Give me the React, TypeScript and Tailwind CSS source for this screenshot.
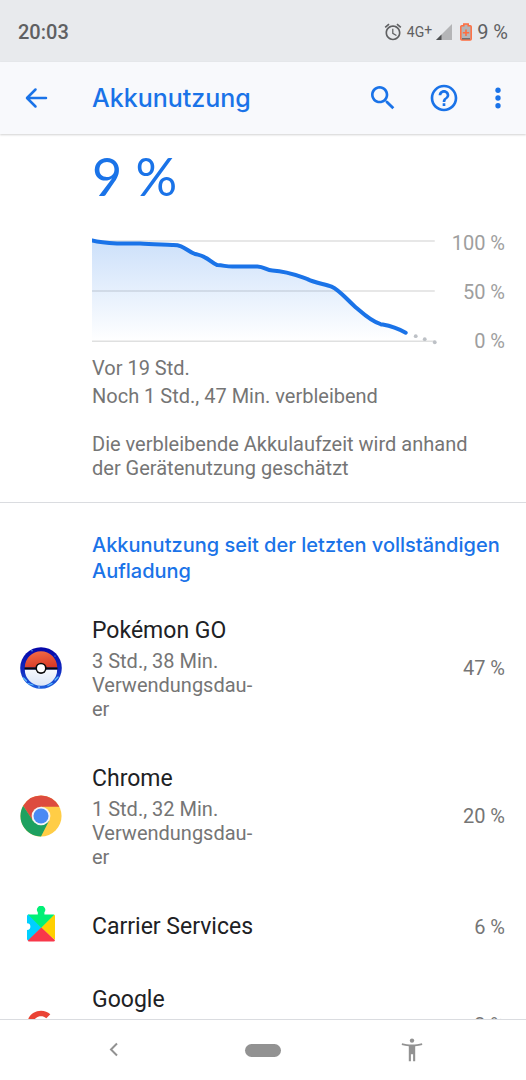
import type { ReactNode } from 'react';

interface AppUsage {
  name: string;
  detail?: string;
  percent: string;
  icon: ReactNode;
}

const PokemonIcon = () => (
  <svg viewBox="0 0 42 42" className="size-[42px]" aria-hidden="true">
    <defs>
      <linearGradient id="pokeRing" x1="0" y1="0" x2="0" y2="1">
        <stop offset="0" stopColor="#0505a8" />
        <stop offset="0.55" stopColor="#1029c0" />
        <stop offset="1" stopColor="#1f62e0" />
      </linearGradient>
      <linearGradient id="pokeTop" x1="0.3" y1="0" x2="0.6" y2="1">
        <stop offset="0" stopColor="#f06a45" />
        <stop offset="1" stopColor="#d93a26" />
      </linearGradient>
      <linearGradient id="pokeBottom" x1="0" y1="0" x2="0" y2="1">
        <stop offset="0" stopColor="#f6f9fd" />
        <stop offset="1" stopColor="#dbe6f6" />
      </linearGradient>
    </defs>
    <circle cx="21" cy="21" r="20.8" fill="url(#pokeRing)" />
    <path d="M4.8 20.5a16.2 16.2 0 0 1 32.4 0z" fill="url(#pokeTop)" />
    <path d="M4.8 22.5a16.2 16.2 0 0 0 32.4 0z" fill="url(#pokeBottom)" />
    <path d="M4.5 20.5h33v2h-33z" fill="#0a0a0a" />
    <circle cx="21" cy="21.3" r="5.6" fill="#0a0a0a" />
    <circle cx="21" cy="21.3" r="4" fill="#fff" />
    <path
      d="M3.5 31l3 3M8 36.5l5 1.5M28 38.5l4-2M35 33l3-3"
      fill="none"
      stroke="#5cc0ff"
      strokeWidth="1.3"
      strokeLinecap="round"
    />
    <circle cx="12" cy="3.8" r="0.7" fill="#5cc0ff" />
    <circle cx="35" cy="9" r="0.6" fill="#5cc0ff" />
    <circle cx="19" cy="40" r="0.8" fill="#a8e0ff" />
  </svg>
);

const ChromeIcon = () => (
  <svg viewBox="0 0 48 48" className="size-[42px]" aria-hidden="true">
    <circle cx="24" cy="24" r="23.5" fill="#ffcd46" />
    <path
      d="M24 .5A23.5 23.5 0 0 0 3.6 12.4L14.5 29.5 24 13.5h21A23.5 23.5 0 0 0 24 .5z"
      fill="#dd4b3e"
    />
    <path
      d="M3.6 12.4A23.5 23.5 0 0 0 24 47.5L33.2 29.3 24 34.5 14.8 29.3z"
      fill="#1da160"
    />
    <circle cx="24" cy="24" r="10.7" fill="#f5f5f5" />
    <circle cx="24" cy="24" r="8.6" fill="#4a8af4" />
  </svg>
);

const CarrierIcon = () => (
  <svg viewBox="0 3 42 42" className="size-[42px]" aria-hidden="true">
    <path d="M8.5 11.5a1.5 1.5 0 0 0-1.5 1.5v7.2a3.4 3.4 0 1 1 0 6.8V36a1.5 1.5 0 0 0 1.5 1.5L22 24.5 9 11.5z" fill="#00d0ff" />
    <path d="M8 11.5h9.8V9.3a4.1 4.1 0 1 1 6.6 0v2.2h9.3l.8.5L21.5 25z" fill="#00f076" />
    <path d="M34.3 11.8a1.5 1.5 0 0 1 .7 1.4V37L21 25z" fill="#ffd000" />
    <path d="M7.8 37.5 21.3 24.5 35 37.3a1.5 1.5 0 0 1-1.5 1.2H8.5z" fill="#f8384a" />
  </svg>
);

const GoogleIcon = () => (
  <svg viewBox="0 0 48 48" className="size-[30px]" aria-hidden="true">
    <path fill="#4285f4" d="M46.1 24.5c0-1.6-.1-3.1-.4-4.5H24v9h12.4c-.6 2.9-2.2 5.3-4.6 6.9l7.3 5.7c4.3-4 7-9.9 7-17.1z" />
    <path fill="#34a853" d="M24 46c5.9 0 11-2 15-5.4l-7.3-5.7c-2 1.4-4.6 2.2-7.7 2.2-6 0-11-4-12.8-9.5l-7.5 5.8C7.4 41 15.1 46 24 46z" />
    <path fill="#fbbc05" d="M11.2 27.6a13 13 0 0 1 0-8.2l-7.5-5.8a22 22 0 0 0 0 19.8z" />
    <path fill="#ea4335" d="M24 9.9c3.3 0 6.2 1.1 8.5 3.3l6.4-6.4C35 3.2 29.9 1 24 1 15.1 1 7.4 6.1 3.7 13.6l7.5 5.8C13 13.9 18 9.9 24 9.9z" />
  </svg>
);

const usages: AppUsage[] = [
  {
    name: 'Pokémon GO',
    detail: '3 Std., 38 Min. Verwendungsdau\u00ADer',
    percent: '47 %',
    icon: <PokemonIcon />,
  },
  {
    name: 'Chrome',
    detail: '1 Std., 32 Min. Verwendungsdau\u00ADer',
    percent: '20 %',
    icon: <ChromeIcon />,
  },
  { name: 'Carrier Services', percent: '6 %', icon: <CarrierIcon /> },
  {
    name: 'Google',
    detail: 'Verwendungsdau\u00ADer',
    percent: '3 %',
    icon: <GoogleIcon />,
  },
];

const StatusBar = () => (
  <div className="flex h-[62px] shrink-0 items-center justify-between bg-[#e8eaed] px-[18px] pt-0.5 text-[#5f6062]">
    <span className="text-xl font-medium">20:03</span>
    <div className="flex items-center">
      <svg viewBox="0 0 24 24" className="size-5" fill="currentColor" role="img" aria-label="Wecker">
        <path d="M22 5.72l-4.6-3.86-1.29 1.53 4.6 3.86L22 5.72zM7.88 3.39L6.6 1.86 2 5.71l1.29 1.53 4.59-3.85zM12.5 8H11v6l4.75 2.85.75-1.23-4-2.37V8zM12 4c-4.97 0-9 4.03-9 9s4.02 9 9 9c4.97 0 9-4.03 9-9s-4.03-9-9-9zm0 16c-3.87 0-7-3.13-7-7s3.13-7 7-7 7 3.13 7 7-3.13 7-7 7z" />
      </svg>
      <span className="ml-1 flex items-start text-sm">
        4G<span className="text-sm leading-4">+</span>
      </span>
      <svg viewBox="0 0 16 16" className="ml-1 size-4" aria-hidden="true">
        <path d="M16 0v16H0z" fill="#b4b5b7" />
        <path d="M5.5 10.5V16H0z" fill="#4f5052" />
      </svg>
      <svg viewBox="0 0 12 18" className="ml-2 h-[18px] w-3" aria-hidden="true">
        <path d="M1.8 2.8h2V.9h4.4v1.9h2a1 1 0 0 1 1 1v12.3a1 1 0 0 1-1 1H1.8a1 1 0 0 1-1-1V3.8a1 1 0 0 1 1-1z" fill="#b4b5b7" stroke="#ff6d3f" strokeWidth="1.5" />
        <path d="M2 15.3h8v1H2z" fill="#4f5052" />
        <path d="M6 6.5v6.4M2.8 9.7h6.4" stroke="#ff6d3f" strokeWidth="1.6" />
      </svg>
      <span className="ml-[5px] text-xl">9 %</span>
    </div>
  </div>
);

const AppBar = () => (
  <header className="z-10 flex h-[72px] shrink-0 items-center bg-[#f8f9fc] pl-5 pr-3 text-[#1a73e8] shadow-[0_1px_2px_rgba(0,0,0,0.18)]">
    <button type="button" aria-label="Zurück">
      <svg viewBox="0 0 32 32" className="size-8" fill="none" stroke="currentColor" strokeWidth="2.5" strokeLinecap="round" strokeLinejoin="round">
        <path d="M26 16H7.5M15.5 7.5L7 16l8.5 8.5" />
      </svg>
    </button>
    <h1 className="ml-10 flex-1 pt-0.5 font-[Inter,sans-serif] text-[25px] font-medium">
      Akkunutzung
    </h1>
    <button type="button" aria-label="Suchen">
      <svg viewBox="0 0 24 24" className="size-8" fill="currentColor">
        <path d="M15.5 14h-.79l-.28-.27C15.41 12.59 16 11.11 16 9.5 16 5.91 13.09 3 9.5 3S3 5.91 3 9.5 5.91 16 9.5 16c1.61 0 3.09-.59 4.23-1.57l.27.28v.79l5 4.99L20.49 19l-4.99-5zm-6 0C7.01 14 5 11.99 5 9.5S7.01 5 9.5 5 14 7.01 14 9.5 11.99 14 9.5 14z" />
      </svg>
    </button>
    <button type="button" aria-label="Hilfe" className="ml-[29px]">
      <svg viewBox="0 0 24 24" className="size-8" fill="currentColor">
        <path d="M11 18h2v-2h-2v2zm1-16C6.48 2 2 6.48 2 12s4.48 10 10 10 10-4.48 10-10S17.52 2 12 2zm0 18c-4.41 0-8-3.59-8-8s3.59-8 8-8 8 3.59 8 8-3.59 8-8 8zm0-14c-2.21 0-4 1.79-4 4h2c0-1.1.9-2 2-2s2 .9 2 2c0 2-3 1.75-3 5h2c0-2.25 3-2.5 3-5 0-2.21-1.79-4-4-4z" />
      </svg>
    </button>
    <button type="button" aria-label="Weitere Optionen" className="ml-[22px]">
      <svg viewBox="0 0 24 24" className="size-8" fill="currentColor">
        <circle cx="12" cy="6.2" r="2" />
        <circle cx="12" cy="12" r="2" />
        <circle cx="12" cy="17.8" r="2" />
      </svg>
    </button>
  </header>
);

const curve =
  'M0 2.5C8 4.5 16 5 25 5.5C32 5.5 40 5.5 48 5.5C58 6.5 70 6.5 80 7C92 6.5 94 13 103 16C107 17 109 17 112 19C117 21 120 25 125 27C132 27.5 134 28.5 140 28.5H165C172 29 174 32 180 32.5C196 33.5 206 38 215 41C223 45 233 46 239 48.5C247 52 254 61 263 69C270 75 278 83 288 86C296 87.5 301 88 313 94.5';

const BatteryChart = () => (
  <div className="flex items-center justify-between">
    <svg viewBox="0 0 342 108" className="w-[83%] overflow-visible" fill="none" role="img" aria-label="Akkuverlauf">
      <defs>
        <linearGradient id="chartFill" x1="0" y1="0" x2="0" y2="1">
          <stop offset="0" stopColor="#1a73e8" stopOpacity="0.22" />
          <stop offset="1" stopColor="#1a73e8" stopOpacity="0" />
        </linearGradient>
        <clipPath id="chartClip">
          <path d="M0-10h342v128H0z" />
        </clipPath>
      </defs>
      <path d="M0 3h342M0 53h342M0 103h342" stroke="#dfe0e0" strokeWidth="1.5" />
      <path d={curve + 'V103H0z'} fill="url(#chartFill)" />
      <path d={curve} stroke="#1a73e8" strokeWidth="4" strokeLinecap="round" clipPath="url(#chartClip)" />
      <circle cx="323" cy="98" r="1.9" fill="#bdc1c6" />
      <circle cx="332" cy="101" r="1.9" fill="#bdc1c6" />
      <circle cx="342" cy="104" r="1.9" fill="#bdc1c6" />
    </svg>
    <div className="flex flex-col gap-[25px] text-right text-xl leading-6 text-[#9e9e9e]">
      <span>100 %</span>
      <span>50 %</span>
      <span>0 %</span>
    </div>
  </div>
);

const UsageRow = ({ name, detail, percent, icon }: AppUsage) => (
  <li className="flex items-center py-[15px] pr-[21px]">
    <div className="flex w-[92px] shrink-0 pl-5">
      <div className="flex w-[42px] justify-center">{icon}</div>
    </div>
    <div className="flex-1 pb-1.5 pt-[7px]">
      <h3 className="text-[23px] leading-[30px] text-[#202124]">{name}</h3>
      {detail && (
        <p className="mt-[3px] w-[168px] text-xl leading-6 text-[#757575]">
          {detail}
        </p>
      )}
    </div>
    <span className="text-xl text-[#757575]">{percent}</span>
  </li>
);

const NavBar = () => (
  <nav className="grid h-[61px] shrink-0 grid-cols-3 items-center border-t border-[#dadce0] bg-white px-10 text-[#929292]">
    <button type="button" aria-label="Zurück" className="flex justify-center">
      <svg viewBox="0 0 24 24" className="size-6" fill="none" stroke="currentColor" strokeWidth="2">
        <path d="M15 5.5L9 11.5l6 6" />
      </svg>
    </button>
    <button type="button" aria-label="Startbildschirm" className="flex justify-center">
      <span className="h-[13px] w-9 rounded-full bg-[#929292]" />
    </button>
    <button type="button" aria-label="Bedienungshilfen" className="flex justify-center">
      <svg viewBox="0 0 24 24" className="size-6" fill="currentColor">
        <circle cx="12" cy="2.6" r="2.2" />
        <path d="M2 5.2c6 1.7 14 1.7 20 0l.3 1.9c-2.4.6-4.7 1-7.1 1.2V23.3h-2.1v-7h-2.2v7H8.8V8.3c-2.4-.2-4.7-.6-7.1-1.2z" />
      </svg>
    </button>
  </nav>
);

export default function App() {
  return (
    <div className="flex h-screen flex-col bg-white font-[Roboto,sans-serif]">
      <StatusBar />
      <AppBar />

      <main className="min-h-0 flex-1 overflow-y-auto [scrollbar-width:none]">
        {/* battery level */}
        <section className="border-b border-[#dadce0] pb-[22px] pl-[92px] pr-[21px] pt-4 text-xl text-[#757575]">
          <div className="mb-7 font-[Lato,sans-serif] text-[52px] leading-[53px] text-[#1a73e8]">
            9 %
          </div>
          <BatteryChart />
          <p className="mt-px leading-7">Vor 19 Std.</p>
          <p className="leading-7">Noch 1 Std., 47 Min. verbleibend</p>
          <p className="mt-[22px] max-w-[400px] leading-6">
            Die verbleibende Akkulaufzeit wird anhand der Gerätenutzung
            geschätzt
          </p>
        </section>

        {/* usage per app */}
        <section>
          <h2 className="pb-2.5 pl-[92px] pr-3 pt-[29px] font-[Inter,sans-serif] text-xl font-medium leading-[26px] text-[#1a73e8]">
            Akkunutzung seit der letzten vollständigen Aufladung
          </h2>
          <ul>
            {usages.map((usage) => (
              <UsageRow key={usage.name} {...usage} />
            ))}
          </ul>
        </section>
      </main>

      <NavBar />
    </div>
  );
}
